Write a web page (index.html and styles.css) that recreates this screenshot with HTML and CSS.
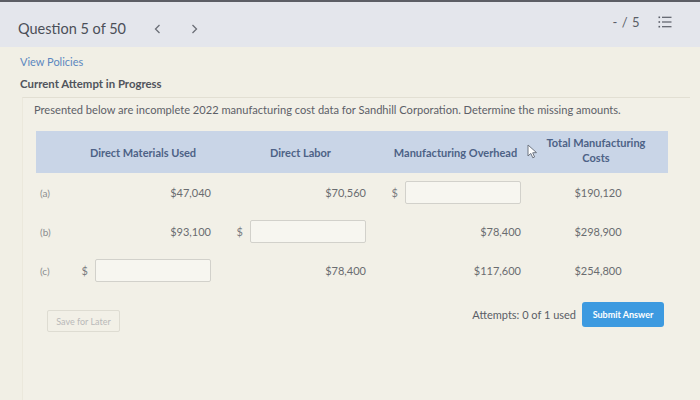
FILE: index.html
```html
<!DOCTYPE html>
<html lang="en">
<head>
<meta charset="utf-8">
<title>Question 5 of 50</title>
<link rel="stylesheet" href="styles.css">
</head>
<body>
<div class="topband"></div>
<header class="qbar">
  <div class="qleft">
    <span class="qtitle">Question 5 of 50</span>
    <svg class="chev" width="7" height="10" viewBox="0 0 7 10"><path d="M5.5 1 L1.5 5 L5.5 9" fill="none" stroke="#6b6e76" stroke-width="1.3"/></svg>
    <svg class="chev chev-next" width="7" height="10" viewBox="0 0 7 10"><path d="M1.5 1 L5.5 5 L1.5 9" fill="none" stroke="#6b6e76" stroke-width="1.3"/></svg>
  </div>
  <div class="qright">
    <span class="score">- / 5</span>
    <svg class="listicon" width="14" height="14" viewBox="0 0 14 14">
      <g fill="#5a5e68"><rect x="0.5" y="1.5" width="1.6" height="1.6"/><rect x="0.5" y="6.2" width="1.6" height="1.6"/><rect x="0.5" y="10.9" width="1.6" height="1.6"/></g>
      <g stroke="#5a5e68" stroke-width="1.2"><path d="M4 2.3 H13.5"/><path d="M4 7 H13.5"/><path d="M4 11.7 H13.5"/></g>
    </svg>
  </div>
</header>
<main class="panel">
  <a class="policies">View Policies</a>
  <div class="attempt">Current Attempt in Progress</div>
  <section class="qbox">
    <p class="prompt">Presented below are incomplete 2022 manufacturing cost data for Sandhill Corporation. Determine the missing amounts.</p>
    <div class="costs">
      <div class="th"></div>
      <div class="th th-dm">Direct Materials Used</div>
      <div class="th th-mid">Direct Labor</div>
      <div class="th th-mid">Manufacturing Overhead</div>
      <div class="th th-total">Total Manufacturing<br>Costs</div>

      <div class="td lbl">(a)</div>
      <div class="td num">$47,040</div>
      <div class="td num">$70,560</div>
      <div class="td num"><span class="cur">$</span><span class="inp"></span></div>
      <div class="td tot">$190,120</div>

      <div class="td lbl">(b)</div>
      <div class="td num">$93,100</div>
      <div class="td num"><span class="cur">$</span><span class="inp"></span></div>
      <div class="td num">$78,400</div>
      <div class="td tot">$298,900</div>

      <div class="td lbl">(c)</div>
      <div class="td num"><span class="cur">$</span><span class="inp"></span></div>
      <div class="td num">$78,400</div>
      <div class="td num">$117,600</div>
      <div class="td tot">$254,800</div>
    </div>
    <div class="actions">
      <span class="save">Save for Later</span>
      <div class="submitgrp">
        <span class="attempts">Attempts: 0 of 1 used</span>
        <span class="submit">Submit Answer</span>
      </div>
    </div>
    <svg class="cursor" width="11" height="15" viewBox="0 0 11 15"><path d="M1 1 L1 12 L3.8 9.4 L5.8 13.8 L7.6 13 L5.7 8.8 L9.5 8.6 Z" fill="#fff" stroke="#6d7480" stroke-width="1"/></svg>
  </section>
</main>
</body>
</html>
```
FILE: styles.css
```css
* { box-sizing: border-box; }
html, body { margin: 0; padding: 0; }
body {
  width: 700px;
  height: 400px;
  overflow: hidden;
  background: #f1efe5;
  font-family: Lato, "Open Sans", Arial, sans-serif;
  color: #55595f;
}
.topband { height: 2px; background: #5c5e65; }
.qbar {
  height: 45px;
  background: #e4e6ec;
  display: flex;
  justify-content: space-between;
  align-items: center;
  padding: 8px 28px 0 18px;
}
.qleft { display: flex; align-items: center; }
.qtitle { font-size: 14.5px; color: #4b4f58; }
.chev { margin-left: 28px; }
.chev-next { margin-left: 30px; }
.qright { display: flex; align-items: center; margin-top: -14px; }
.score { font-size: 13px; color: #5a5e66; letter-spacing: 0.5px; }
.listicon { margin-left: 18px; }
.panel { padding: 8px 10px 0 20px; }
.policies { display: block; font-size: 11px; line-height: 14px; color: #5b87bf; }
.attempt { margin-top: 8px; font-size: 11.4px; line-height: 14px; font-weight: bold; color: #50545c; }
.qbox {
  position: relative;
  margin: 6px 0 0 2px;
  padding: 5px 22px 0 11px;
  border-top: 1px solid #e2dfd3;
  border-left: 1px solid #ebe8dc;
  background: #f2f0e7;
  height: 320px;
}
.prompt { margin: 0; font-size: 11.1px; line-height: 14px; color: #5d6067; }
.costs {
  margin: 14px 0 0 2px;
  display: grid;
  grid-template-columns: 44px 134px 155px 155px 144px;
  grid-template-rows: 42px 39px 39px 39px;
}
.th {
  background: #c9d5e7;
  display: flex;
  align-items: center;
  justify-content: center;
  text-align: center;
  font-size: 11px;
  line-height: 15px;
  font-weight: bold;
  color: #4d6286;
}
.th-dm { padding-right: 8px; }
.th-mid { padding-left: 18px; }
.th-total { padding-bottom: 4px; }
.td {
  display: flex;
  align-items: center;
  font-size: 11px;
  color: #6a6c70;
}
.lbl { padding-left: 4px; font-size: 10px; color: #8b8c8f; }
.num { justify-content: flex-end; padding-right: 3px; }
.tot { justify-content: center; padding-left: 4px; }
.cur { margin-right: 7px; color: #7a7b7f; }
.inp {
  width: 116px;
  height: 23px;
  border: 1px solid #d2d1cb;
  background: #f7f6f0;
  border-radius: 2px;
}
.actions {
  margin: 12px 0 0 2px;
  width: 632px;
  display: flex;
  justify-content: space-between;
  align-items: flex-start;
}
.save {
  margin: 8px 0 0 11px;
  width: 73px;
  height: 22px;
  border: 1px solid #dedcd2;
  border-radius: 2px;
  font-size: 9px;
  color: #b9b9b9;
  display: flex;
  align-items: center;
  justify-content: center;
}
.submitgrp { display: flex; align-items: center; margin-right: 4px; }
.attempts { font-size: 11px; color: #5a5e66; margin-right: 6px; }
.submit {
  width: 82px;
  height: 25px;
  background: #3d9ae0;
  border-radius: 3px;
  color: #fff;
  font-size: 9px;
  font-weight: bold;
  display: flex;
  align-items: center;
  justify-content: center;
}
.cursor { position: absolute; left: 504px; top: 46px; }
```
